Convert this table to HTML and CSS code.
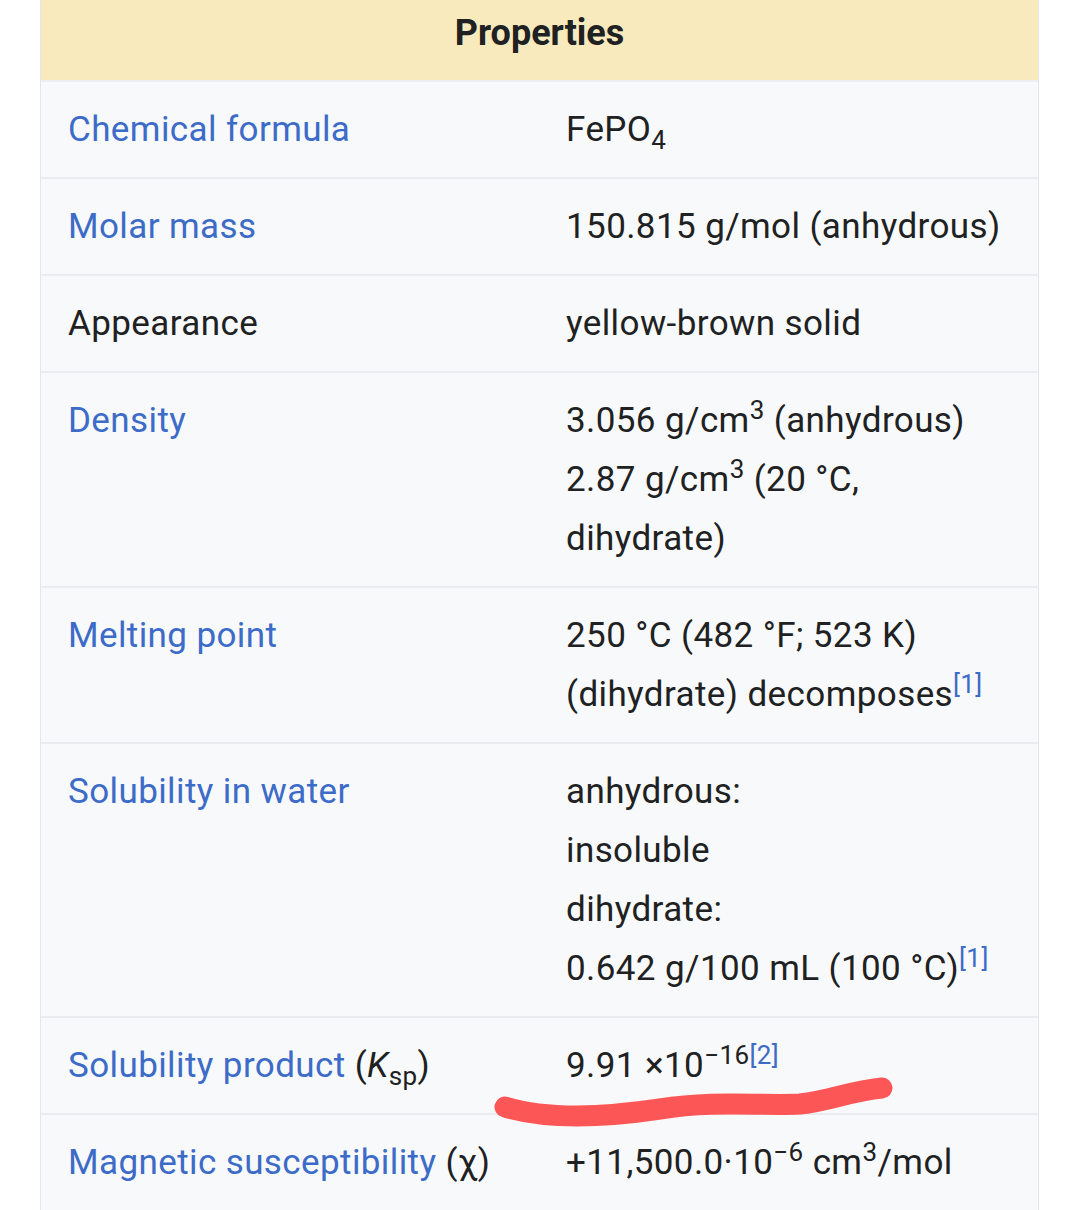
FILE: index.html
```html
<!DOCTYPE html>
<html lang="en">
<head>
<meta charset="utf-8">
<link rel="stylesheet" href="styles.css">
</head>
<body>
<div class="page">
  <div class="box">
    <div class="head">Properties</div>
    <div class="row">
      <div class="label"><a>Chemical formula</a></div>
      <div class="value">FePO<sub>4</sub></div>
    </div>
    <div class="row">
      <div class="label"><a>Molar mass</a></div>
      <div class="value">150.815 g/mol (anhydrous)</div>
    </div>
    <div class="row">
      <div class="label">Appearance</div>
      <div class="value">yellow-brown solid</div>
    </div>
    <div class="row">
      <div class="label"><a>Density</a></div>
      <div class="value">3.056 g/cm<sup>3</sup> (anhydrous)<br>2.87 g/cm<sup>3</sup> (20 °C,<br>dihydrate)</div>
    </div>
    <div class="row">
      <div class="label"><a>Melting point</a></div>
      <div class="value">250 °C (482 °F; 523 K)<br>(dihydrate) decomposes<sup class="ref">[1]</sup></div>
    </div>
    <div class="row">
      <div class="label"><a>Solubility in water</a></div>
      <div class="value">anhydrous:<br>insoluble<br>dihydrate:<br>0.642 g/100 mL (100 °C)<sup class="ref">[1]</sup></div>
    </div>
    <div class="row">
      <div class="label"><a>Solubility product</a> (<i>K</i><sub>sp</sub>)</div>
      <div class="value">9.91 ×10<sup>−16</sup><sup class="ref">[2]</sup></div>
    </div>
    <div class="row">
      <div class="label"><a>Magnetic susceptibility</a> (χ)</div>
      <div class="value">+11,500.0·10<sup>−6</sup> cm<sup>3</sup>/mol</div>
    </div>
  </div>
  <svg class="scribble" width="420" height="60" viewBox="490 1070 420 60">
    <path d="M505 1107 C 545 1119, 600 1118, 660 1109 C 715 1100, 760 1106, 800 1104 C 830 1101, 850 1091, 882 1088" fill="none" stroke="#fd5656" stroke-width="21" stroke-linecap="round" stroke-linejoin="round"/>
  </svg>
</div>
</body>
</html>
```
FILE: styles.css
```css
html, body {
  margin: 0;
  padding: 0;
  background: #ffffff;
}
body {
  font-family: Roboto, "Noto Sans", "Liberation Sans", sans-serif;
  color: #202122;
  font-size: 35px;
  letter-spacing: 0.4px;
}
.page {
  position: relative;
  width: 1080px;
  height: 1210px;
  overflow: hidden;
}
.box {
  margin: 0 40px;
  width: 999px;
  border-left: 1px solid #e4e6ea;
  border-right: 1px solid #e4e6ea;
  box-sizing: border-box;
  background: #f8f9fa;
}
.head {
  height: 82px;
  background: #f8eabd;
  display: flex;
  align-items: center;
  justify-content: center;
  font-weight: 700;
  font-size: 36px;
  letter-spacing: 0;
  border-bottom: 2px solid #eceef1;
  padding-bottom: 14px;
  box-sizing: border-box;
}
.row {
  display: grid;
  grid-template-columns: 498px 1fr;
  padding: 18px 0 18px 27px;
  line-height: 59px;
  border-bottom: 2px solid #eaecf0;
}
.row:last-child {
  border-bottom: none;
}
.label a {
  color: #3c6bc8;
}
.value {
  color: #202122;
}
sup, sub {
  line-height: 0;
  font-size: 26px;
}
sub {
  vertical-align: -0.3em;
}
sup {
  vertical-align: 0.5em;
}
sup.ref {
  color: #3c6bc8;
  font-size: 26px;
}
.scribble {
  position: absolute;
  left: 490px;
  top: 1070px;
}
```
